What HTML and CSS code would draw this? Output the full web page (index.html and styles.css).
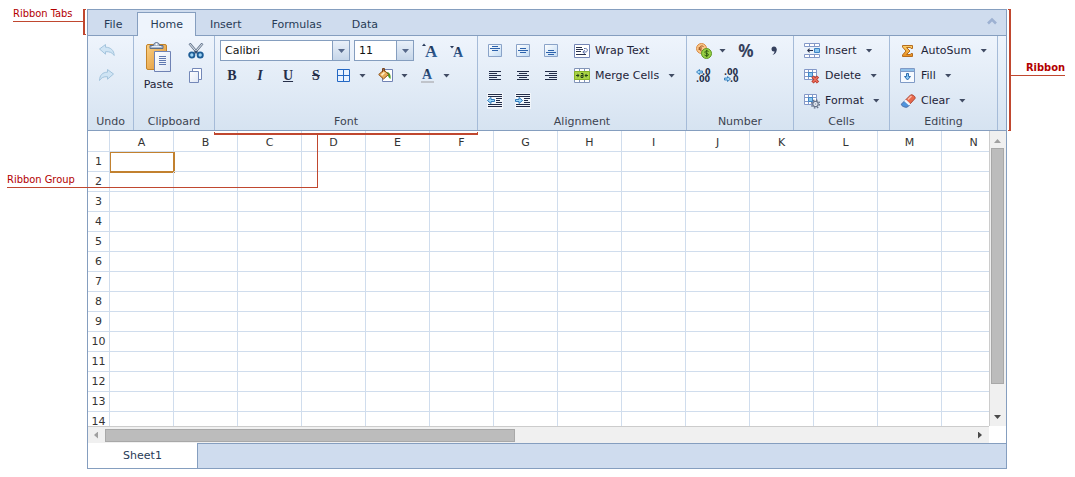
FILE: index.html
```html
<!DOCTYPE html>
<html lang="en">
<head>
<meta charset="utf-8">
<title>Spreadsheet ribbon</title>
<link rel="stylesheet" href="styles.css">
</head>
<body>
<svg class="defs" aria-hidden="true">
  <defs>
    <linearGradient id="board" x1="0" y1="0" x2="1" y2="1"><stop offset="0" stop-color="#fbd184"/><stop offset="1" stop-color="#dd9030"/></linearGradient>
    <linearGradient id="sheet" x1="0" y1="0" x2="1" y2="1"><stop offset="0" stop-color="#ffffff"/><stop offset="1" stop-color="#dfe7f5"/></linearGradient>
    <linearGradient id="box" x1="0" y1="0" x2="1" y2="1"><stop offset="0" stop-color="#ffffff"/><stop offset="1" stop-color="#c3dcf4"/></linearGradient>
    <linearGradient id="ink" x1="0" y1="0" x2="0" y2="1"><stop offset="0" stop-color="#15243f"/><stop offset="1" stop-color="#3b72b4"/></linearGradient>
    <linearGradient id="gold" x1="0" y1="0" x2="0" y2="1"><stop offset="0" stop-color="#ffd36a"/><stop offset="1" stop-color="#e88d1c"/></linearGradient>
  </defs>
</svg>
<main class="page">
  <section class="app">
    <nav class="tabs">
      <button class="tab">File</button>
      <button class="tab tab-active">Home</button>
      <button class="tab">Insert</button>
      <button class="tab">Formulas</button>
      <button class="tab">Data</button>
      <button class="collapse" aria-label="Minimize ribbon">
        <svg width="10" height="8" viewBox="0 0 10 8"><path d="M1 6.500 5 2.500 9 6.500" fill="none" stroke="#9db1d2" stroke-width="2.600"/></svg>
      </button>
    </nav>

    <div class="ribbon">
      <section class="group group-undo">
        <div class="rows">
          <div class="row"><button class="tool" aria-label="Undo"><svg width="16" height="16" viewBox="0 0 16 16"><path d="M.5 6 6.500 1.500v2.700c5 0 8.500 3 8.700 8.300-2-3-4.500-4-8.700-3.800v2.500z" fill="#cfe4f4" stroke="#a3c4dd"/></svg></button></div>
          <div class="row"><button class="tool" aria-label="Redo"><svg width="16" height="16" viewBox="0 0 16 16"><path d="M14.500 6 8.500 1.500v2.700C3.500 4.200.7 7.200.5 12.500c2-3 4-4 8-3.800v2.500z" fill="#cfe4f4" stroke="#a3c4dd"/></svg></button></div>
        </div>
        <h2 class="group-name">Undo</h2>
      </section>

      <section class="group group-clipboard">
        <div class="clip">
          <button class="paste">
            <svg width="28" height="32" viewBox="0 0 28 32">
              <rect x="1.500" y="3.500" width="20" height="25" rx="1.500" fill="url(#board)" stroke="#c48328"/>
              <path d="M5 7.500h13V4.500h-3.500c0-4-6-4-6 0H5z" fill="#aab8cc" stroke="#5c6f8c"/>
              <path d="M7 5.500h9" stroke="#e8eef6"/><circle cx="11.500" cy="3.300" r="1" fill="#fff"/>
              <path d="M9.500 10.500h16v20h-16z" fill="url(#sheet)" stroke="#6f82b4"/>
              <path d="M14 15.500h7M14 17.500h7M14 19.500h7M14 21.500h7M14 23.500h7" stroke="#6078b0"/>
            </svg>
            <span>Paste</span>
          </button>
          <div class="rows">
            <div class="row"><button class="tool" aria-label="Cut"><svg width="16" height="16" viewBox="0 0 16 16"><path d="M1.500.5 10 10.500M14.500.5 6 10.500" stroke="#66788f" stroke-width="2.600"/><path d="M1.800 1 9 9.200M14.200 1 7 9.200" stroke="#eef2f7" stroke-width="1"/><circle cx="3.800" cy="12" r="2.600" fill="#9fd4f4" stroke="#1e5d96" stroke-width="1.900"/><circle cx="12.200" cy="12" r="2.600" fill="#9fd4f4" stroke="#1e5d96" stroke-width="1.900"/><circle cx="8" cy="8.800" r="1.200" fill="#354d70"/></svg></button></div>
            <div class="row"><button class="tool" aria-label="Copy"><svg width="16" height="16" viewBox="0 0 16 16"><path d="M4.500.5h9v11h-9z" fill="#fff" stroke="#7488b8"/><path d="M1.500 3.500h9v11h-9z" fill="url(#sheet)" stroke="#7488b8"/></svg></button></div>
          </div>
        </div>
        <h2 class="group-name">Clipboard</h2>
      </section>

      <section class="group group-font">
        <div class="rows">
          <div class="row row-fonts">
            <div class="combo combo-family"><select aria-label="Font family"><option>Calibri</option></select></div>
            <div class="combo combo-size"><select aria-label="Font size"><option>11</option></select></div>
            <button class="tool" aria-label="Grow font"><svg width="18" height="20" viewBox="0 0 18 20"><path d="M1 5h4L3 2.500z" fill="#28395a"/><text x="4" y="16" class="letter letter-big">A</text></svg></button>
            <button class="tool" aria-label="Shrink font"><svg width="18" height="20" viewBox="0 0 18 20"><path d="M1 5h4L3 7.500z" fill="#28395a"/><text x="4" y="16" class="letter letter-small">A</text></svg></button>
          </div>
          <div class="row">
            <button class="tool glyph" aria-label="Bold">B</button>
            <button class="tool glyph glyph-italic" aria-label="Italic">I</button>
            <button class="tool glyph glyph-underline" aria-label="Underline">U</button>
            <button class="tool glyph glyph-strike" aria-label="Strikethrough">S</button>
            <button class="tool tool-menu" aria-label="Borders"><svg width="16" height="16" viewBox="0 0 16 16"><path d="M1.500 1.500h12v12h-12zM7.500 1.500v12M1.500 7.500h12" fill="#e8f2ff" stroke="#2468c4"/></svg><span class="arrow"></span></button>
            <button class="tool tool-menu" aria-label="Fill color"><svg width="16" height="16" viewBox="0 0 16 16"><path d="M4.500 1.500h10v12h-10z" fill="#fff" stroke="#7183b4"/><path d="M9 4c3 .5 4 3 3.500 7-2-1-2.500-3-3.500-7z" fill="#4c9c22"/><path d="M.7 6.500 6 1.800l4.500 4.700-5 4.500z" fill="#e7ad5a" stroke="#8a4d16"/><path d="M3 6.500 6 4l1 1-3 3z" fill="#fff0c8"/><path d="M4.500 4V.5h2v3" fill="none" stroke="#7a4318"/></svg><span class="arrow"></span></button>
            <button class="tool tool-menu" aria-label="Font color"><svg width="16" height="20" viewBox="0 0 16 20"><text x="2" y="13" class="letter letter-small">A</text><path d="M1 15h13v2H1z" fill="#c0c4cb"/></svg><span class="arrow"></span></button>
          </div>
        </div>
        <h2 class="group-name">Font</h2>
      </section>

      <section class="group group-align">
        <div class="rows">
          <div class="row">
            <button class="tool" aria-label="Top align"><svg width="16" height="16" viewBox="0 0 16 16"><path d="M1.500 1.500h13v12h-13z" fill="url(#box)" stroke="#8aa3c8"/><path d="M5 3.500h6M3 5.500h10M5 7.500h6" stroke="#2c62ac"/></svg></button>
            <button class="tool" aria-label="Middle align"><svg width="16" height="16" viewBox="0 0 16 16"><path d="M1.500 1.500h13v12h-13z" fill="url(#box)" stroke="#8aa3c8"/><path d="M5 5.500h6M3 7.500h10M5 9.500h6" stroke="#2c62ac"/></svg></button>
            <button class="tool" aria-label="Bottom align"><svg width="16" height="16" viewBox="0 0 16 16"><path d="M1.500 1.500h13v12h-13z" fill="url(#box)" stroke="#8aa3c8"/><path d="M5 7.500h6M3 9.500h10M5 11.500h6" stroke="#2c62ac"/></svg></button>
            <button class="tool tool-text"><svg width="16" height="16" viewBox="0 0 16 16"><path d="M.5 1.500h15v13H.5z" fill="#fff" stroke="#7385b5"/><path d="M2 4.500h6M2 6.500h7M2 8.500h5M2 11.500h10" stroke="#28324e"/><path d="M10 5.500h1.500c2.500 0 2.500 3.500 0 3.500H9M10.800 7 8.800 9l2 2" fill="none" stroke="#5b6fa8"/></svg>Wrap Text</button>
          </div>
          <div class="row">
            <button class="tool" aria-label="Align left"><svg width="16" height="16" viewBox="0 0 16 16"><path d="M2 3.500h12M2 5.500h8M2 7.500h12M2 9.500h8M2 11.500h12" stroke="#222c48"/></svg></button>
            <button class="tool" aria-label="Align center"><svg width="16" height="16" viewBox="0 0 16 16"><path d="M2 3.500h12M4 5.500h8M2 7.500h12M4 9.500h8M2 11.500h12" stroke="#222c48"/></svg></button>
            <button class="tool" aria-label="Align right"><svg width="16" height="16" viewBox="0 0 16 16"><path d="M2 3.500h12M6 5.500h8M2 7.500h12M6 9.500h8M2 11.500h12" stroke="#222c48"/></svg></button>
            <button class="tool tool-text"><svg width="16" height="16" viewBox="0 0 16 16"><path d="M.5.500h15v14H.5zM5.500.5v14M10.500.5v14" fill="#fff" stroke="#8295b8"/><path d="M.5 3.500h15v8H.5z" fill="#a9d445" stroke="#86b227"/><path d="M2 7.500h3M14 7.500h-3" stroke="#26401a"/><path d="M3.500 5.500v4l2-2zM12.500 5.500v4l-2-2z" fill="#26401a"/><path d="M7 5.500h2v4H7v-2h2" fill="none" stroke="#26401a"/></svg>Merge Cells<span class="arrow"></span></button>
          </div>
          <div class="row">
            <button class="tool" aria-label="Decrease indent"><svg width="16" height="16" viewBox="0 0 16 16"><path d="M0 0h16v16H0z" fill="#fff" fill-opacity=".6"/><path d="M1 1.500h14M1 3.500h14M9 5.500h6M9 7.500h4M9 9.500h6M1 11.500h14M1 13.500h14" stroke="#222c48"/><path d="M.5 7.500 4 4.500v2h3.500v2H4v2z" fill="#a3dafa" stroke="#2f78b8"/></svg></button>
            <button class="tool" aria-label="Increase indent"><svg width="16" height="16" viewBox="0 0 16 16"><path d="M0 0h16v16H0z" fill="#fff" fill-opacity=".6"/><path d="M1 1.500h14M1 3.500h14M9 5.500h6M9 7.500h4M9 9.500h6M1 11.500h14M1 13.500h14" stroke="#222c48"/><path d="M7.500 7.500 4 4.500v2H.5v2H4v2z" fill="#a3dafa" stroke="#2f78b8"/></svg></button>
          </div>
        </div>
        <h2 class="group-name">Alignment</h2>
      </section>

      <section class="group group-number">
        <div class="rows">
          <div class="row">
            <button class="tool tool-menu" aria-label="Accounting format"><svg width="16" height="16" viewBox="0 0 16 16"><circle cx="5.500" cy="5.500" r="5" fill="#fbc78a" stroke="#d88a44"/><path d="M7.500 3.500C5 2 3.500 4 3.500 5.500S5 9 7.500 7.500M2.500 5h3.500M2.500 6.300h3" fill="none" stroke="#9c5420"/><circle cx="10.500" cy="10.500" r="5" fill="#98d044" stroke="#5a9622"/><path d="M12.500 8.500c-1.500-1.200-4-.5-3.500 1s3.500.8 3.500 2.200-2.500 1.600-4 .3M10.700 6.800v7.400" fill="none" stroke="#2f5a10"/></svg><span class="arrow"></span></button>
            <button class="tool glyph glyph-percent" aria-label="Percent style">%</button>
            <button class="tool" aria-label="Comma style"><svg width="16" height="16" viewBox="0 0 16 16"><circle cx="8" cy="6" r="2.500" fill="#35415e"/><path d="M10.500 5.500c.5 3-.5 5.500-4 6.500 1.500-1.500 2.200-2.500 2-4.500z" fill="#35415e"/></svg></button>
          </div>
          <div class="row">
            <button class="tool" aria-label="Increase decimal"><svg width="18" height="16" viewBox="0 0 18 16"><path d="M1.500 4 4.500 1.500v1.500h3v2h-3v1.500z" fill="#a3dafa" stroke="#2f78b8" stroke-width=".9"/><text x="7" y="7" class="digits">.0</text><text x="1" y="14" class="digits">.00</text></svg></button>
            <button class="tool" aria-label="Decrease decimal"><svg width="18" height="16" viewBox="0 0 18 16"><text x="1" y="7" class="digits">.00</text><path d="M7.500 11 4.500 8.500V10h-3v2h3v1.500z" fill="#a3dafa" stroke="#2f78b8" stroke-width=".9"/><text x="7" y="14" class="digits">.0</text></svg></button>
          </div>
        </div>
        <h2 class="group-name">Number</h2>
      </section>

      <section class="group group-cells">
        <div class="rows">
          <div class="row"><button class="tool tool-text"><svg width="16" height="16" viewBox="0 0 16 16"><path d="M.5.500h15v3H.5zM5.500.5v3M10.500.5v3M.5 11.500h15v3H.5zM5.500 11.500v3M10.500 11.500v3" fill="#fff" stroke="#8398c8"/><path d="M10.500 5.500h5v4h-5z" fill="#8cc7f0" stroke="#3d84c4"/><path d="M4 7.500h5" stroke="#222c48"/><path d="M3 7.500l2.500-2.500v5z" fill="#222c48"/></svg>Insert<span class="arrow"></span></button></div>
          <div class="row"><button class="tool tool-text"><svg width="16" height="16" viewBox="0 0 16 16"><path d="M.5 1.500h12v10H.5zM4.500 1.500v10M8.500 1.500v10M.5 4.500h12M.5 8.500h12" fill="#fff" stroke="#8398c8"/><path d="M4.500 4.500h4v4h-4z" fill="#8cc7f0" stroke="#3d84c4"/><path d="M8.500 8.500l5.500 6M14 8.500l-5.500 6" stroke="#b83a2c" stroke-width="3.200"/><path d="M9 9l4.500 5M13.500 9 9 14" stroke="#ee705d" stroke-width="1.500"/></svg>Delete<span class="arrow"></span></button></div>
          <div class="row"><button class="tool tool-text"><svg width="16" height="16" viewBox="0 0 16 16"><path d="M.5 1.500h12v10H.5zM4.500 1.500v10M8.500 1.500v10M.5 4.500h12M.5 8.500h12" fill="#fff" stroke="#8398c8"/><path d="M4.500 4.500h4v4h-4z" fill="#8cc7f0" stroke="#3d84c4"/><circle cx="11.500" cy="11" r="4" fill="none" stroke="#67748b" stroke-width="1.400" stroke-dasharray="1.600 1.540"/><circle cx="11.500" cy="11" r="2.700" fill="#f4f7fb" stroke="#67748b" stroke-width="1.200"/><circle cx="11.500" cy="11" r="1" fill="#a9b6c9"/></svg>Format<span class="arrow"></span></button></div>
        </div>
        <h2 class="group-name">Cells</h2>
      </section>

      <section class="group group-editing">
        <div class="rows">
          <div class="row"><button class="tool tool-text"><svg width="16" height="16" viewBox="0 0 16 16"><path d="M2.500 2.500h10v3h-1.500l-.5-1H6.500L10 8l-3.500 3.500h4l.5-1h1.500v3h-10v-1.500L6 8 2.500 4z" fill="url(#gold)" stroke="#b46c20"/></svg>AutoSum<span class="arrow"></span></button></div>
          <div class="row"><button class="tool tool-text"><svg width="16" height="16" viewBox="0 0 16 16"><path d="M.5.500h14v14H.5z" fill="#f6faff" stroke="#7f9ac6"/><path d="M1 1h13v2H1z" fill="#8fc0ea"/><path d="M.5 3.500h14" stroke="#7f9ac6"/><path d="M6.500 5.500h2v3h2l-3 3.500-3-3.500h2z" fill="#8cc9f4" stroke="#2f6fb0"/></svg>Fill<span class="arrow"></span></button></div>
          <div class="row"><button class="tool tool-text"><svg width="16" height="16" viewBox="0 0 16 16"><path d="M5.500 7 10.500 2c1.500-1 5.500 1.500 4.500 3.500l-5 5.500z" fill="#e8694c" stroke="#a94a3a"/><path d="M8 6.500 11.500 3" stroke="#ffb9a4" stroke-width="1.600"/><path d="M4.500 8l5 4-2 2c-1.500 1-7-1-6-3z" fill="#4f94dc" stroke="#4a6aa4"/><path d="M4.200 8.200l1.600-1.600 4.700 4.400-1.500 1.600z" fill="#f4f6fb"/></svg>Clear<span class="arrow"></span></button></div>
        </div>
        <h2 class="group-name">Editing</h2>
      </section>
    </div>

    <div class="workarea">
      <div class="viewport">
        <table class="grid" id="grid"></table>
      </div>
      <div class="scroll scroll-v"><span class="tip tip-up"></span><span class="thumb thumb-v"></span><span class="tip tip-down"></span></div>
      <div class="scroll scroll-h"><span class="tip tip-left"></span><span class="thumb thumb-h"></span><span class="tip tip-right"></span></div>
    </div>

    <footer class="sheets">
      <button class="sheet">Sheet1</button>
      <div class="sheets-rest"></div>
    </footer>
  </section>

  <div class="note note-tabs">Ribbon Tabs</div>
  <div class="bracket bracket-tabs"></div>
  <div class="note note-group">Ribbon Group</div>
  <div class="bracket bracket-group"></div>
  <div class="stem"></div>
  <div class="note note-ribbon">Ribbon</div>
  <div class="bracket bracket-ribbon"></div>
</main>
<script src="app.js"></script>
</body>
</html>
```
FILE: styles.css
```css
* { box-sizing: border-box; }

body {
  margin: 0;
  background: #fff;
  color: #333;
  font: 11px/16px "DejaVu Sans", Verdana, sans-serif;
}

button, select {
  font: inherit;
  color: #1e2438;
  background: none;
  border: 0;
  margin: 0;
  padding: 0;
}

svg { display: block; flex: none; }
.defs { position: absolute; width: 0; height: 0; }

.page {
  position: relative;
  padding: 9px 68px 8px 87px;
}

.app { border: 1px solid #859ebf; }

/* Tabs */
.tabs {
  display: flex;
  height: 26px;
  padding: 2px 8px 0 1px;
  background: #cfdcee;
  box-shadow: inset 0 -1px #859ebf;
}
.tab {
  padding: 0 14px;
  border: 1px solid transparent;
  border-bottom: 0;
  color: #283b56;
}
.tab-active {
  margin-right: -1px;
  padding: 0 12px;
  border-color: #859ebf;
  background: #eef4fc;
}
.collapse { margin-left: auto; padding: 0 1px 6px; }

/* Ribbon */
.ribbon {
  display: flex;
  background: linear-gradient(#eef4fc, #d6e3f1);
  border-bottom: 1px solid #859ebf;
}
.group {
  flex: none;
  display: flex;
  flex-direction: column;
  padding-top: 2px;
  border-right: 1px solid #a5bbd8;
}
.group-name {
  margin: 0;
  height: 17px;
  font-size: 11px;
  font-weight: normal;
  line-height: 17px;
  text-align: center;
  color: #3c4350;
}
.rows { height: 75px; }
.row { display: flex; align-items: center; height: 25px; }

.group-undo { width: 46px; }
.group-undo .row { justify-content: center; padding-right: 8px; }
.group-clipboard { width: 81px; }
.group-font { width: 263px; }
.group-align { width: 209px; }
.group-number { width: 107px; }
.group-cells { width: 96px; }
.group-editing { width: 108px; }

.group-font .rows { padding-left: 3px; }
.group-align .rows { padding-left: 3px; }
.group-number .rows { padding-left: 3px; }
.group-cells .rows { padding-left: 4px; }
.group-editing .rows { padding-left: 4px; }

.tool {
  display: flex;
  flex: none;
  align-items: center;
  justify-content: center;
  width: 28px;
  height: 24px;
}
.tool-menu { width: 42px; gap: 7px; justify-content: flex-start; padding-left: 6px; }
.tool-text { width: auto; gap: 5px; padding: 0 6px; }
.tool-text .arrow { margin-left: 4px; }
.group-align .tool-text { padding-left: 9px; }

.arrow {
  width: 7px;
  height: 4px;
  background: #414c64;
  clip-path: polygon(0 0, 100% 0, 50% 100%);
}

.clip { display: flex; height: 75px; }
.clip .tool { width: 26px; }
.paste {
  display: flex;
  flex-direction: column;
  align-items: center;
  width: 49px;
  padding-top: 3px;
  gap: 4px;
}

.row-fonts .tool { padding-left: 4px; }
.combo {
  position: relative;
  height: 21px;
  border: 1px solid #859ebf;
  background: #fff;
}
.combo-family { width: 130px; margin: 0 4px 0 2px; }
.combo-size { width: 60px; }
.combo select {
  width: 100%;
  height: 100%;
  padding-left: 4px;
  appearance: none;
  color: #111;
}
.combo::before {
  content: "";
  position: absolute;
  inset: 0 0 0 auto;
  width: 16px;
  border-left: 1px solid #859ebf;
  background: linear-gradient(#e9f0f9, #c6d6e9);
  pointer-events: none;
}
.combo::after {
  content: "";
  position: absolute;
  top: 8px;
  right: 4px;
  width: 7px;
  height: 4px;
  background: #56688a;
  clip-path: polygon(0 0, 100% 0, 50% 100%);
  pointer-events: none;
}

.glyph {
  font: bold 14px/20px "Liberation Serif", "Times New Roman", serif;
  color: #262f49;
}
.glyph-italic { font-style: italic; }
.glyph-underline { text-decoration: underline; }
.glyph-strike { text-decoration: line-through; }
.glyph-percent { font: bold 17px/20px "Noto Sans", sans-serif; color: #35415e; }
.letter { font-family: "Liberation Serif", serif; font-weight: bold; fill: url(#ink); }
.letter-big { font-size: 17px; }
.letter-small { font-size: 14px; }
.digits { font: bold 8px "DejaVu Sans", sans-serif; fill: #262f49; }

/* Cells */
.workarea {
  display: grid;
  grid-template-columns: minmax(0, 1fr) 17px;
  grid-template-rows: 295px 17px;
}
.viewport { overflow: hidden; }
.grid {
  width: 918px;
  table-layout: fixed;
  border-collapse: separate;
  border-spacing: 0;
}
.grid th, .grid td {
  position: relative;
  width: 64px;
  height: 20px;
  padding: 0;
  border: solid #d0dded;
  border-width: 0 1px 1px 0;
  font-weight: normal;
  line-height: 16px;
}
.grid thead th { height: 21px; padding-top: 3px; }
.grid th:first-child { width: 22px; }
.selected::after {
  content: "";
  position: absolute;
  inset: 0 -2px -2px 0;
  border: solid #c2812f;
  border-width: 1px 2px 2px 1px;
}

/* Scrollbars */
.scroll { display: flex; align-items: center; background: #f0f0f0; }
.scroll-v {
  flex-direction: column;
  padding: 8px 1px 7px 0;
  border-left: 1px solid #ccc;
}
.scroll-h {
  padding: 0 7px 0 6px;
  border-top: 1px solid #ccc;
}
.thumb { background: #bcbcbc; border: 1px solid #a8a8a8; }
.thumb-v { width: 13px; height: 236px; margin: 5px 0 auto; }
.thumb-h { width: 410px; height: 13px; margin: 0 auto 0 7px; }
.tip { background: #a0a0a0; }
.tip-up, .tip-down { width: 7px; height: 4px; }
.tip-left, .tip-right { width: 4px; height: 7px; }
.tip-up { clip-path: polygon(0 100%, 100% 100%, 50% 0); }
.tip-down { background: #4a4a4a; clip-path: polygon(0 0, 100% 0, 50% 100%); }
.tip-left { clip-path: polygon(100% 0, 100% 100%, 0 50%); }
.tip-right { background: #4a4a4a; clip-path: polygon(0 0, 0 100%, 100% 50%); }

/* Sheet tabs */
.sheets { display: flex; height: 25px; }
.sheet { width: 109px; color: #283b56; }
.sheets-rest {
  flex: 1;
  background: #cfdcee;
  border: solid #859ebf;
  border-width: 1px 0 0 1px;
}

/* Callouts */
.note, .bracket, .stem { position: absolute; }
.note {
  height: 16px;
  font-family: "DejaVu Sans Condensed", "DejaVu Sans", Tahoma, sans-serif;
  color: #b30000;
  white-space: nowrap;
  border-bottom: 1px solid #c0472f;
}
.note-tabs { top: 6px; left: 13px; width: 70px; }
.note-group { top: 172px; left: 7px; width: 311px; }
.note-ribbon {
  top: 60px;
  right: 10px;
  width: 55px;
  font-weight: bold;
  text-align: right;
}
.bracket { border: 0 solid #c0472f; }
.bracket-tabs { top: 9px; left: 83px; width: 3px; height: 26px; border-width: 1px 0 1px 2px; }
.bracket-group { top: 132px; left: 214px; width: 264px; height: 3px; border-width: 0 1px 2px; }
.bracket-ribbon { top: 9px; right: 64px; width: 3px; height: 122px; border-width: 1px 2px 1px 0; }
.stem { top: 135px; left: 317px; height: 53px; border-left: 1px solid #c0472f; }
```
FILE: app.js
```js
const columns = "ABCDEFGHIJKLMN".split("");
const rowCount = 14;
const grid = document.getElementById("grid");

const head = grid.createTHead().insertRow();
["", ...columns].forEach((name) => {
  const th = document.createElement("th");
  th.scope = "col";
  th.textContent = name;
  head.append(th);
});

const body = grid.createTBody();
for (let r = 1; r <= rowCount; r++) {
  const row = body.insertRow();
  const th = document.createElement("th");
  th.scope = "row";
  th.textContent = r;
  row.append(th);
  columns.forEach((name) => {
    const cell = row.insertCell();
    if (r === 1 && name === "A") cell.className = "selected";
  });
}
```
